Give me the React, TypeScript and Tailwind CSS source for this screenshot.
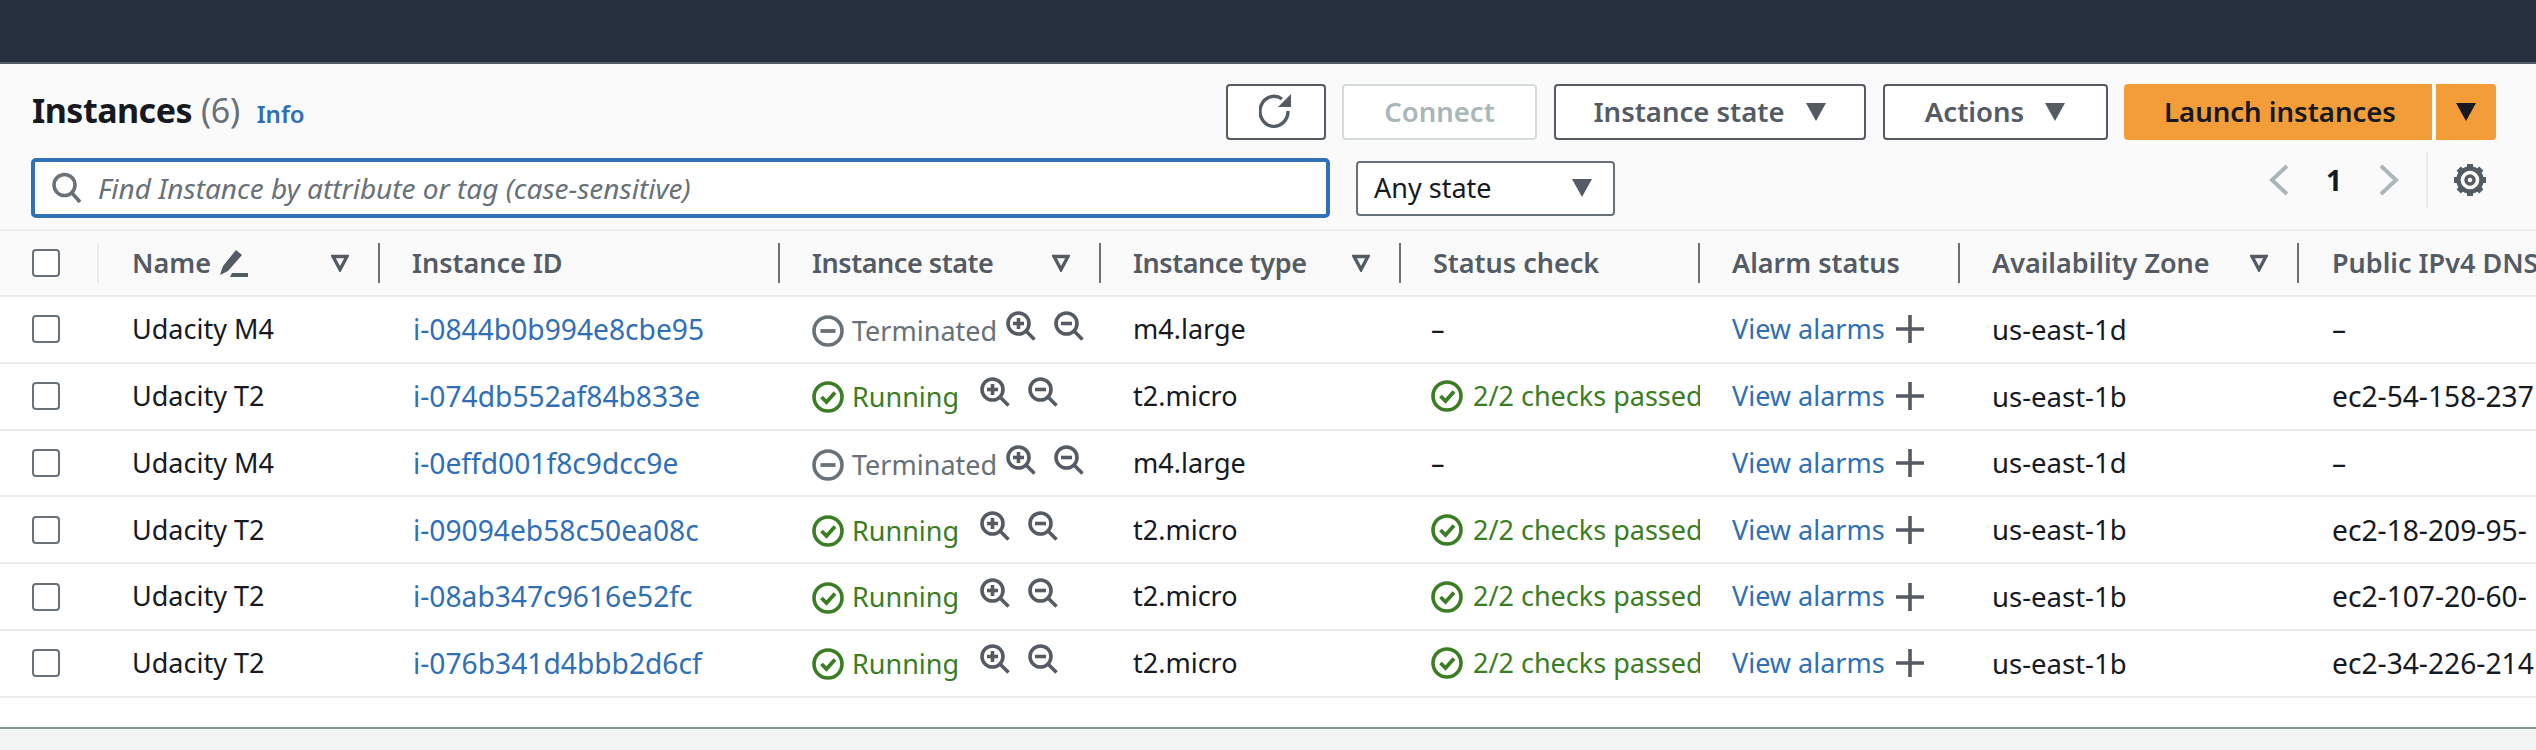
const font = { fontFamily: '"Noto Sans", sans-serif' };

const Caret = ({ className = "" }: { className?: string }) => (
  <svg width="22" height="20" viewBox="0 0 22 20" className={className}>
    <path d="M1 1h20L11 19z" fill="currentColor" />
  </svg>
);

const SortIcon = () => (
  <svg width="18" height="18" viewBox="0 0 18 18" className="shrink-0 text-[#545b64]">
    <path d="M2 2.5h14L9 15.5z" fill="none" stroke="currentColor" strokeWidth="3.4" strokeLinejoin="miter" />
  </svg>
);

const Divider = ({ light = false }: { light?: boolean }) => (
  <div className={`w-[2px] h-[40px] shrink-0 ${light ? "bg-[#eaeded]" : "bg-[#687078]"}`} />
);

const Check = () => (
  <div className="w-[28px] h-[28px] rounded-[4px] border-2 border-[#687078] bg-white box-border" />
);

const Zoom = ({ plus }: { plus: boolean }) => (
  <svg width="30" height="30" viewBox="0 0 30 30" className="shrink-0 text-[#545b64]">
    <circle cx="12.5" cy="12.5" r="10.5" fill="none" stroke="currentColor" strokeWidth="3.6" />
    <path d="M20 20l8.5 8.5" stroke="currentColor" strokeWidth="3.6" fill="none" />
    <path d="M7 12.5h11" stroke="currentColor" strokeWidth="3.6" fill="none" />
    {plus && <path d="M12.5 7v11" stroke="currentColor" strokeWidth="3.6" fill="none" />}
  </svg>
);

const OkIcon = () => (
  <svg width="32" height="32" viewBox="0 0 32 32" className="shrink-0 text-[#3b7d23]">
    <circle cx="16" cy="16" r="14" fill="none" stroke="currentColor" strokeWidth="3.6" />
    <path d="M9.5 16l5 5 8.5-9.5" fill="none" stroke="currentColor" strokeWidth="3.8" />
  </svg>
);

const StopIcon = () => (
  <svg width="32" height="32" viewBox="0 0 32 32" className="shrink-0 text-[#687078]">
    <circle cx="16" cy="16" r="14" fill="none" stroke="currentColor" strokeWidth="3.6" />
    <path d="M8.5 16h15" fill="none" stroke="currentColor" strokeWidth="3.8" />
  </svg>
);

const PlusIcon = () => (
  <svg width="30" height="30" viewBox="0 0 30 30" className="shrink-0 text-[#545b64]">
    <path d="M15 1v28M1 15h28" stroke="currentColor" strokeWidth="3.6" fill="none" />
  </svg>
);

const grid =
  "grid grid-cols-[99px_281px_400px_321px_300px_299px_260px_339px_237px] w-[2536px]";

const rows = [
  ["Udacity M4", "i-0844b0b994e8cbe95", false, "m4.large", "us-east-1d", "–"],
  ["Udacity T2", "i-074db552af84b833e", true, "t2.micro", "us-east-1b", "ec2-54-158-237"],
  ["Udacity M4", "i-0effd001f8c9dcc9e", false, "m4.large", "us-east-1d", "–"],
  ["Udacity T2", "i-09094eb58c50ea08c", true, "t2.micro", "us-east-1b", "ec2-18-209-95-"],
  ["Udacity T2", "i-08ab347c9616e52fc", true, "t2.micro", "us-east-1b", "ec2-107-20-60-"],
  ["Udacity T2", "i-076b341d4bbb2d6cf", true, "t2.micro", "us-east-1b", "ec2-34-226-214"],
] as const;

const HeaderCell = ({ label, sort, edit, tight }: { label: string; sort?: boolean; edit?: boolean; tight?: boolean }) => (
  <div className={`flex items-center min-w-0 ${edit ? "pl-[33px]" : "pl-[32px]"}`}>
    <span className={`text-[27px] font-semibold text-[#545b64] whitespace-nowrap ${tight ? "tracking-[-0.45px]" : ""}`}>{label}</span>
    {edit && (
      <svg width="30" height="30" viewBox="0 0 30 30" className="ml-[8px] text-[#545b64]">
        <path d="M1 27l3-9L17 2l6 5L9 23z" fill="currentColor" />
        <path d="M13 25h16v4H11z" fill="currentColor" />
      </svg>
    )}
    <div className="flex-1" />
    {sort && <SortIcon />}
    {sort && <div className="w-[29px]" />}
    <Divider />
  </div>
);

const Button = ({ label, caret }: { label: string; caret?: boolean }) => (
  <button className={`h-[56px] rounded-[4px] border-2 border-[#545b64] bg-white text-[#545b64] text-[27.5px] font-semibold flex items-center justify-center gap-[20px] ${label === "Actions" ? "w-[225px]" : "w-[312px]"}`}>
    {label}
    {caret && <Caret />}
  </button>
);

export default function App() {
  return (
    <div style={font} className="w-[2536px] h-[750px] overflow-hidden flex flex-col bg-[#f2f3f3] text-[#16191f]">
      <div className="h-[64px] shrink-0 bg-[#27303f] border-b-2 border-[#545b64]" />

      <div className="h-[665px] shrink-0 bg-white border-b-2 border-[#879596] flex flex-col overflow-hidden">
        <div className="h-[165px] shrink-0 bg-[#fafafa] pl-[31px] pr-[40px] pt-[20px] flex flex-col">
          <div className="flex items-center justify-between h-[56px]">
            <div className="flex items-baseline pl-[1px] -mt-[3px]">
              <span className="text-[34px] font-bold text-[#16191f] tracking-[-0.5px]">Instances</span>
              <span className="text-[34px] text-[#687078] ml-[9px] tracking-[-0.4px]">(6)</span>
              <span className="text-[24px] font-semibold text-[#2f6fb5] ml-[17px]">Info</span>
            </div>
            <div className="flex items-center">
              <button className="w-[100px] h-[56px] rounded-[4px] border-2 border-[#545b64] bg-white flex items-center justify-center text-[#545b64]">
                <svg width="34" height="38" viewBox="0 0 34 38">
                  <path d="M29 18a14 15 0 1 1-6-12" fill="none" stroke="currentColor" strokeWidth="3.4" />
                  <path d="M32 1v13H19z" fill="currentColor" />
                </svg>
              </button>
              <button className="ml-[16px] w-[195px] h-[56px] rounded-[4px] border-2 border-[#d5dbdb] bg-white text-[#aab7b8] text-[27.5px] font-semibold">Connect</button>
              <div className="ml-[17px]"><Button label="Instance state" caret /></div>
              <div className="ml-[17px]"><Button label="Actions" caret /></div>
              <button className="ml-[16px] w-[308px] h-[56px] pl-[4px] rounded-l-[4px] bg-[#f29d38] text-[#16191f] text-[27.5px] font-semibold">Launch instances</button>
              <button className="ml-[4px] w-[60px] h-[56px] rounded-r-[4px] bg-[#f29d38] text-[#16191f] flex items-center justify-center"><Caret /></button>
            </div>
          </div>

          <div className="flex items-center mt-[18px] h-[60px]">
            <div className="w-[1299px] h-[60px] rounded-[5px] border-[4px] border-[#2f70b6] bg-white flex items-center pl-[16px] box-border">
              <svg width="32" height="32" viewBox="0 0 32 32" className="text-[#687078] shrink-0">
                <circle cx="13.5" cy="13" r="10.5" fill="none" stroke="currentColor" strokeWidth="3.6" />
                <path d="M21 21l8 9" stroke="currentColor" strokeWidth="3.6" fill="none" />
              </svg>
              <span className="ml-[15px] text-[28px] italic text-[#687078] whitespace-nowrap">Find Instance by attribute or tag (case-sensitive)</span>
            </div>
            <div className="ml-[26px] w-[259px] h-[55px] rounded-[4px] border-2 border-[#687078] bg-white flex items-center justify-between pl-[16px] pr-[20px] text-[27px] text-[#16191f]">
              Any state
              <Caret className="text-[#545b64]" />
            </div>
            <div className="flex-1" />
            <div className="flex items-center -mt-[16px]">
              <svg width="22" height="32" viewBox="0 0 22 32" className="text-[#aab7b8]">
                <path d="M19 2L4 16l15 14" fill="none" stroke="currentColor" strokeWidth="4" />
              </svg>
              <span className="mx-[36px] text-[28px] font-bold text-[#16191f]">1</span>
              <svg width="22" height="32" viewBox="0 0 22 32" className="text-[#aab7b8]">
                <path d="M3 2l15 14L3 30" fill="none" stroke="currentColor" strokeWidth="4" />
              </svg>
              <div className="ml-[26px] w-[2px] h-[56px] bg-[#eaeded]" />
              <svg width="34" height="34" viewBox="0 0 34 34" className="ml-[25px] mr-[9px] text-[#545b64]">
                <circle cx="17" cy="17" r="11.5" fill="none" stroke="currentColor" strokeWidth="4.4" />
                <path d="M17 1v5M17 28v5M1 17h5M28 17h5M5.7 5.7l3.5 3.5M24.8 24.8l3.5 3.5M5.7 28.3l3.5-3.5M24.8 9.2l3.5-3.5" fill="none" stroke="currentColor" strokeWidth="6" />
                <circle cx="17" cy="17" r="4" fill="none" stroke="currentColor" strokeWidth="3.4" />
              </svg>
            </div>
          </div>
        </div>

        <div className={`${grid} h-[68px] shrink-0 bg-[#fafafa] border-y-2 border-[#eaeded] box-border`}>
          <div className="flex items-center justify-between pl-[32px]">
            <Check />
            <Divider light />
          </div>
          <HeaderCell label="Name" sort edit />
          <HeaderCell label="Instance ID" />
          <HeaderCell label="Instance state" sort tight />
          <HeaderCell label="Instance type" sort tight />
          <HeaderCell label="Status check" />
          <HeaderCell label="Alarm status" />
          <HeaderCell label="Availability Zone" sort />
          <div className="flex items-center pl-[33px] overflow-hidden">
            <span className="text-[27px] font-semibold text-[#545b64] whitespace-nowrap">Public IPv4 DNS</span>
          </div>
        </div>

        {rows.map(([name, id, running, type, az, dns]) => (
          <div key={id} className={`${grid} h-[66.8px] shrink-0 border-b-2 border-[#eaeded] box-border text-[27px] bg-white`}>
            <div className="flex items-center pl-[32px]"><Check /></div>
            <div className="flex items-center pl-[33px] whitespace-nowrap">{name}</div>
            <div className="flex items-center pl-[33px] text-[28.2px] text-[#2f6fb5] whitespace-nowrap">{id}</div>
            <div className={`flex items-center pl-[32px] whitespace-nowrap ${running ? "pt-[2px]" : "pt-[4px]"}`}>
              {running ? <OkIcon /> : <StopIcon />}
              <span className={`ml-[8px] ${running ? "text-[#3b7d23] w-[128px]" : "text-[#687078] w-[154px]"}`}>
                {running ? "Running" : "Terminated"}
              </span>
              <div className="-mt-[10px] flex items-center gap-[18px]">
                <Zoom plus />
                <Zoom plus={false} />
              </div>
            </div>
            <div className="flex items-center pl-[32px] whitespace-nowrap">{type}</div>
            <div className="flex items-center pl-[30px] whitespace-nowrap overflow-hidden">
              {running ? (
                <>
                  <OkIcon />
                  <span className="ml-[10px] text-[#3b7d23]">2/2 checks passed</span>
                </>
              ) : (
                "–"
              )}
            </div>
            <div className="flex items-center pl-[32px] whitespace-nowrap">
              <span className="text-[#2f6fb5]">View alarms</span>
              <span className="ml-[10px]"><PlusIcon /></span>
            </div>
            <div className="flex items-center pl-[32px] text-[27.5px] whitespace-nowrap">{az}</div>
            <div className="flex items-center pl-[33px] text-[28.2px] whitespace-nowrap overflow-hidden">{dns}</div>
          </div>
        ))}
      </div>
    </div>
  );
}
